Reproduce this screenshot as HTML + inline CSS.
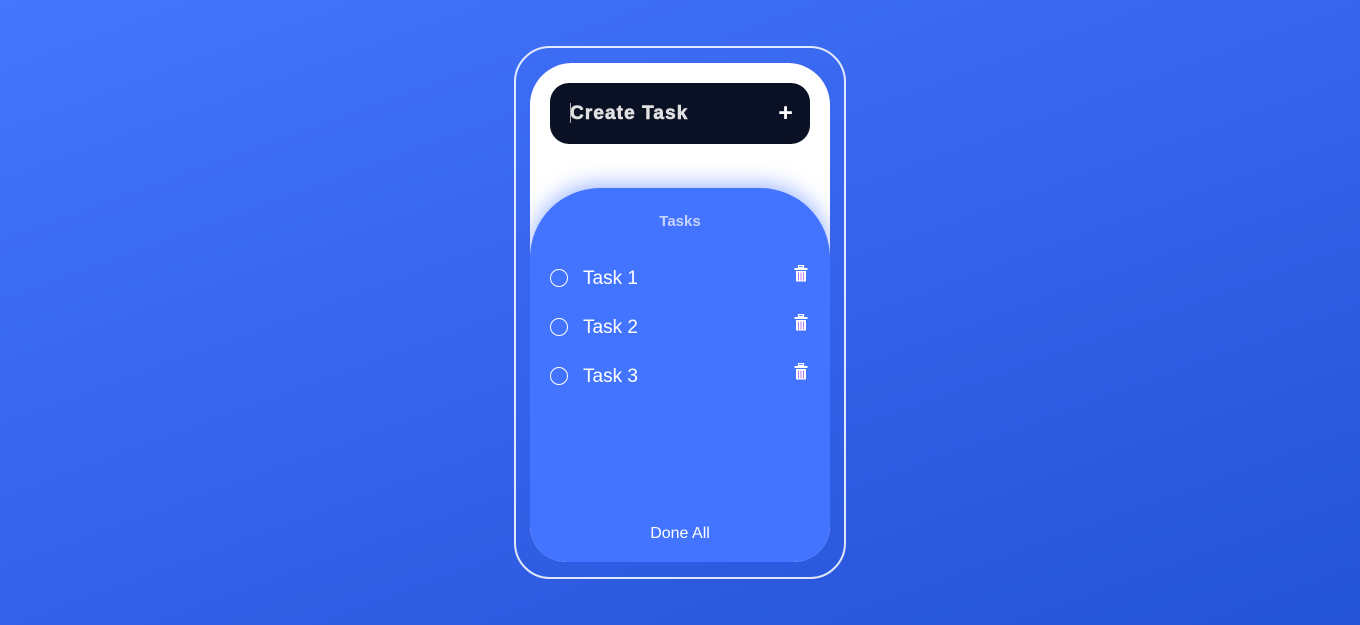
<!DOCTYPE html>
<html><head><style>
*{margin:0;padding:0;box-sizing:border-box}
body{width:1360px;height:625px;overflow:hidden;background:linear-gradient(160deg,#4475fd 0%,#3563ea 50%,#2353d6 100%);font-family:"Liberation Sans",sans-serif;position:relative}
.outer{position:absolute;left:514px;top:46px;width:332px;height:533px;border:2px solid rgba(255,255,255,.85);border-radius:36px}
.card{position:absolute;left:530px;top:63px;width:300px;height:499px;background:#fff;border-radius:42px 42px 36px 36px;overflow:hidden}
.input{position:absolute;left:20px;top:20px;width:260px;height:61px;background:#0b1124;border-radius:19px;color:#e0e0e0;font-weight:bold;font-size:19px;letter-spacing:1.1px;padding-left:20px;line-height:62px;-webkit-text-stroke:0.6px #e0e0e0}
.input .cur{position:absolute;left:20px;top:20px;width:1px;height:20px;background:#aaa}
.plus{position:absolute;right:16px;top:-1px;color:#fff;font-size:25px;font-weight:bold;-webkit-text-stroke:0}
.panel{position:absolute;left:0;top:125px;width:300px;height:374px;background:#4374ff;border-radius:70px 70px 36px 36px;box-shadow:0 -4px 20px rgba(67,116,255,.5)}
.title{position:absolute;top:25px;width:100%;text-align:center;color:#c8d4ff;font-weight:bold;font-size:15px}
.row{position:absolute;left:20px;width:260px;height:20px}
.circ{position:absolute;left:0;top:1px;width:18px;height:18px;border:1.5px solid #fff;border-radius:50%}
.lbl{position:absolute;left:33px;top:0px;color:#fff;font-size:19px}
.trash{position:absolute;right:2px;top:-3px}
.done{position:absolute;bottom:19px;width:100%;text-align:center;color:#fff;font-size:16px}
</style></head><body>
<div class="outer"></div>
<div class="card">
<div class="input"><span class="cur"></span>Create Task<span class="plus">+</span></div>
<div class="panel">
<div class="title">Tasks</div>
<div class="row" style="top:80px"><div class="circ"></div><div class="lbl">Task 1</div><svg class="trash" width="14" height="18" viewBox="0 0 14 18"><rect x="4.5" y="0.5" width="5" height="2" fill="none" stroke="#fff" stroke-width="1.2"/><rect x="0.5" y="3" width="13" height="2" fill="#fff"/><path d="M2 6h10v10.5H2z" fill="#fff"/><path d="M4.5 7.5v8M7 7.5v8M9.5 7.5v8" stroke="#b57aff" stroke-width="1"/></svg></div>
<div class="row" style="top:129px"><div class="circ"></div><div class="lbl">Task 2</div><svg class="trash" width="14" height="18" viewBox="0 0 14 18"><rect x="4.5" y="0.5" width="5" height="2" fill="none" stroke="#fff" stroke-width="1.2"/><rect x="0.5" y="3" width="13" height="2" fill="#fff"/><path d="M2 6h10v10.5H2z" fill="#fff"/><path d="M4.5 7.5v8M7 7.5v8M9.5 7.5v8" stroke="#b57aff" stroke-width="1"/></svg></div>
<div class="row" style="top:178px"><div class="circ"></div><div class="lbl">Task 3</div><svg class="trash" width="14" height="18" viewBox="0 0 14 18"><rect x="4.5" y="0.5" width="5" height="2" fill="none" stroke="#fff" stroke-width="1.2"/><rect x="0.5" y="3" width="13" height="2" fill="#fff"/><path d="M2 6h10v10.5H2z" fill="#fff"/><path d="M4.5 7.5v8M7 7.5v8M9.5 7.5v8" stroke="#b57aff" stroke-width="1"/></svg></div>
<div class="done">Done All</div>
</div>
</div>
</body></html>
